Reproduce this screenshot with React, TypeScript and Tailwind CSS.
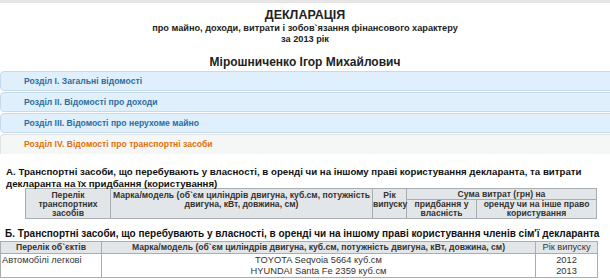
const sections = [
  'Розділ I. Загальні відомості',
  'Розділ II. Відомості про доходи',
  'Розділ III. Відомості про нерухоме майно',
];

const th = 'border border-[#a7adb0] bg-[#e3e6e8] p-0 font-bold text-[color:#333] align-top leading-[9px]';
const td = 'border border-[#a7adb0] p-0 text-[color:#333] align-top';

export default function App() {
  return (
    <div className="w-[610px] h-[280px] overflow-hidden bg-white border-t-[3px] border-[#e6e6e6] font-['Liberation_Sans',Arial,sans-serif]">
      <div className="text-center font-bold text-[#222]">
        <div className="text-[12.5px] leading-[14px] mt-[5px]">ДЕКЛАРАЦІЯ</div>
        <div className="text-[9.2px] leading-[11px] mt-px">про майно, доходи, витрати і зобов`язання фінансового характеру</div>
        <div className="text-[9.2px] leading-[11px]">за 2013 рік</div>
        <div className="text-[12px] leading-[14px] mt-[10px]">Мірошниченко Ігор Михайлович</div>
      </div>

      <div className="mt-[2px] mr-[-12px] flex flex-col gap-px">
        {sections.map((s) => (
          <div
            key={s}
            className="h-[20px] rounded-l-[4px] border border-[#c5dbec] bg-[#dfeffc] pl-[23px] text-[8.6px] font-bold text-[#2e6e9e] flex items-center"
          >
            {s}
          </div>
        ))}
        <div className="h-[20px] rounded-tl-[4px] border border-[#dde3e6] border-b-0 bg-[#f5f6f6] pl-[23px] text-[8.6px] font-bold text-[#e17009] flex items-center">
          Розділ IV. Відомості про транспортні засоби
        </div>
      </div>

      <div className="px-[6px] pt-[12px] text-[9.7px] font-bold text-[#111] leading-[12px]">
        А. Транспортні засоби, що перебувають у власності, в оренді чи на іншому праві користування декларанта, та витрати декларанта на їх придбання (користування)
      </div>

      <div className="pl-[25px] -mt-[2px]">
        <table className="w-[571px] table-fixed border-collapse text-[length:8.6px] text-center">
          <colgroup>
            <col className="w-[85px]" />
            <col className="w-[262px]" />
            <col className="w-[34px]" />
            <col className="w-[70px]" />
            <col className="w-[120px]" />
          </colgroup>
          <tbody>
            <tr className="h-[10px]">
              <th rowSpan={2} className={`${th} pt-[2px]`}>Перелік транспортних засобів</th>
              <th rowSpan={2} className={`${th} pt-[2px]`}>
                Марка/модель (об`єм циліндрів двигуна, куб.см, потужність двигуна, кВт, довжина, см)
              </th>
              <th rowSpan={2} className={`${th} pt-[2px]`}>Рік випуску</th>
              <th colSpan={2} className={`${th} pt-px`}>Сума витрат (грн) на</th>
            </tr>
            <tr className="h-[18px]">
              <th className={th}>придбання у власність</th>
              <th className={th}>оренду чи на інше право користування</th>
            </tr>
          </tbody>
        </table>
      </div>

      <div className="px-[5px] mt-[9px] text-[10px] font-bold text-[#111] leading-[12px] whitespace-nowrap">
        Б. Транспортні засоби, що перебувають у власності, в оренді чи на іншому праві користування членів сім'ї декларанта
      </div>

      <div className="mt-px w-[598px]">
        <table className="w-full table-fixed border-collapse text-[length:8.6px]">
          <colgroup>
            <col className="w-[101px]" />
            <col />
            <col className="w-[62px]" />
          </colgroup>
          <tbody>
            <tr className="h-[12px]">
              <th className={`${th} text-center leading-[11px]`}>Перелік об`єктів</th>
              <th className={`${th} text-center leading-[11px]`}>
                Марка/модель (об`єм циліндрів двигуна, куб.см, потужність двигуна, кВт, довжина, см)
              </th>
              <th className={`${th} text-center !font-normal text-[length:9.3px] leading-[11px]`}>Рік випуску</th>
            </tr>
            <tr className="h-[23px]">
              <td className={`${td} text-left pl-px text-[length:9.3px] leading-[11px] pt-px`}>Автомобілі легкові</td>
              <td className={`${td} text-center text-[length:9.3px] leading-[11px] pt-px`}>
                <div>TOYOTA Seqvoia 5664 куб.см</div>
                <div>HYUNDAI Santa Fe 2359 куб.см</div>
              </td>
              <td className={`${td} text-center text-[length:9.3px] leading-[11px] pt-px`}>
                <div>2012</div>
                <div>2013</div>
              </td>
            </tr>
          </tbody>
        </table>
      </div>
    </div>
  );
}
